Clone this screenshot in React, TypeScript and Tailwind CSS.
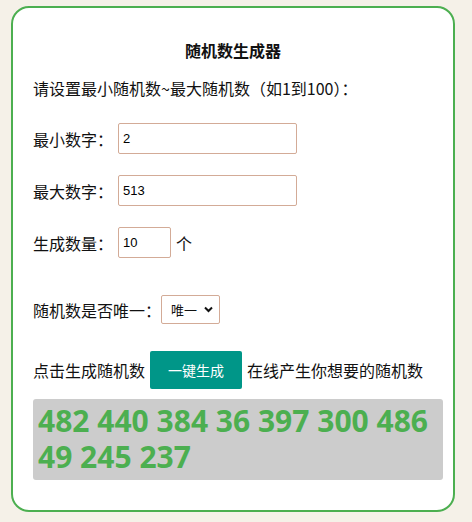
import React from "react";

const cjk = "font-['Microsoft_YaHei','Noto_Sans_CJK_SC',sans-serif]";

function Field({ label, value, wide = true, suffix }: { label: string; value: string; wide?: boolean; suffix?: string }) {
  return (
    <div className="flex items-center">
      <span className="text-[16px] leading-[24px] w-[85px]">{label}</span>
      <input
        readOnly
        value={value}
        className={`${wide ? "w-[179px]" : "w-[53px]"} h-[31px] border border-[#d3ab97] rounded-[2px] px-[4px] text-[13px] text-black font-['Liberation_Sans',Arial,sans-serif] outline-none`}
      />
      {suffix && <span className="ml-[5px] text-[16px]">{suffix}</span>}
    </div>
  );
}

export default function App() {
  const numbers = [482, 440, 384, 36, 397, 300, 486, 49, 245, 237];
  return (
    <div className={`min-h-[522px] bg-[#f5f1e8] pt-[6px] pl-[11px] ${cjk} text-[#111]`}>
      <div className="w-[444px] h-[506px] border-2 border-[#4caf50] rounded-[18px] bg-white pl-[20px] pr-[10px] pt-[30px]">
        <h1 className="text-center text-[16px] leading-[24px] font-bold pr-[10px]">随机数生成器</h1>
        <p className="mt-[14px] text-[16px] leading-[24px]">请设置最小随机数~最大随机数（如1到100）：</p>

        <div className="mt-[23px] flex flex-col gap-[21px]">
          <Field label="最小数字：" value="2" />
          <Field label="最大数字：" value="513" />
          <Field label="生成数量：" value="10" wide={false} suffix="个" />
        </div>

        <div className="mt-[37px] flex items-center">
          <span className="text-[16px] leading-[24px]">随机数是否唯一：</span>
          <div className="relative">
            <select
              defaultValue="1"
              className="appearance-none w-[59px] h-[29px] border border-[#d3ab97] rounded-[2px] pl-[9px] text-[13px] bg-white outline-none"
            >
              <option value="1">唯一</option>
              <option value="0">不唯一</option>
            </select>
            <svg
              className="pointer-events-none absolute right-[7px] top-[11px]"
              width="9"
              height="7"
              viewBox="0 0 9 7"
            >
              <path d="M1 1.5 L4.5 5 L8 1.5" fill="none" stroke="#111" strokeWidth="2" />
            </svg>
          </div>
        </div>

        <div className="mt-[27px] flex items-center text-[16px]">
          <span>点击生成随机数</span>
          <button className="mx-[5px] w-[92px] h-[38px] bg-[#009688] rounded-[2px] text-white text-[14px]">一键生成</button>
          <span>在线产生你想要的随机数</span>
        </div>

        <div className="mt-[10px] bg-[#cccccc] rounded-[3px] px-[5px] pt-[4px] pb-[5px] text-[#4caf50] text-[30px] leading-[36px] font-bold font-['Noto_Sans','Segoe_UI',sans-serif]">
          {numbers.join(" ")}
        </div>
      </div>
    </div>
  );
}
